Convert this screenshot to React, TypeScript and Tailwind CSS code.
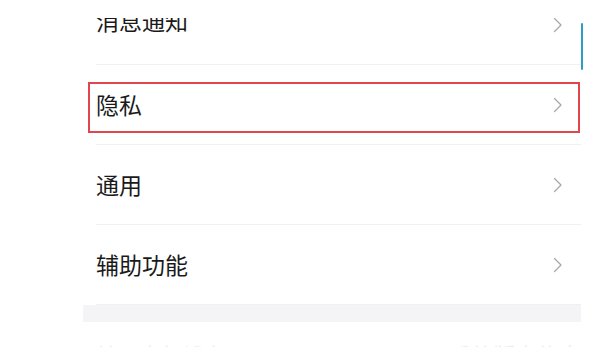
import * as React from "react";

const ROWS = ["消息通知", "隐私", "通用", "辅助功能"];

/** Thin grey chevron used at the end of each settings row. */
function Chevron() {
  return (
    <svg width="10" height="16" viewBox="0 0 10 16" fill="none" aria-hidden="true">
      <path d="M1.5 1.5 8 8l-6.5 6.5" stroke="#a8a8a8" strokeWidth="1.3" strokeLinecap="round" strokeLinejoin="round" />
    </svg>
  );
}

function SettingRow({ label, highlighted, first }: { label: string; highlighted?: boolean; first?: boolean }) {
  return (
    <div className="relative h-[80px] pl-[13px]">
      <div className="flex h-full items-center justify-between border-b border-[#f0f0f2] pr-[18px]">
        <span className={`text-[23px] leading-none text-[#1a1a1a] ${first ? "-translate-y-[4px]" : ""}`}>{label}</span>
        <Chevron />
      </div>
      {highlighted && (
        // annotation box drawn over the row
        <div className="pointer-events-none absolute left-[5px] top-[17px] h-[51px] w-[492px] border-2 border-[#e0474c]" />
      )}
    </div>
  );
}

export default function App() {
  return (
    <div className="relative h-[347px] w-[592px] overflow-hidden bg-white font-['Noto_Sans_CJK_SC','Noto_Sans',sans-serif]">
      <div className="h-[18px] bg-white" />
      <div className="h-[329px] overflow-hidden">
        <div className="-mt-[33px] ml-[83px] w-[498px]">
          {ROWS.map((label, i) => (
            <SettingRow key={label} label={label} first={i === 0} highlighted={label === "隐私"} />
          ))}
          <div className="h-[17px] bg-[#f4f4f6]" />
          <div className="flex h-[80px] items-start justify-between pl-[12px] pt-[21px]">
            <span className="text-[22px] leading-none text-[#ececec]">关于本机设备</span>
            <span className="text-[22px] leading-none text-[#ececec]">系统版本信息</span>
          </div>
        </div>
      </div>
      <div className="absolute left-[581px] top-[23px] h-[47px] w-[2px] rounded-full bg-[#2c9ec4]" />
    </div>
  );
}
